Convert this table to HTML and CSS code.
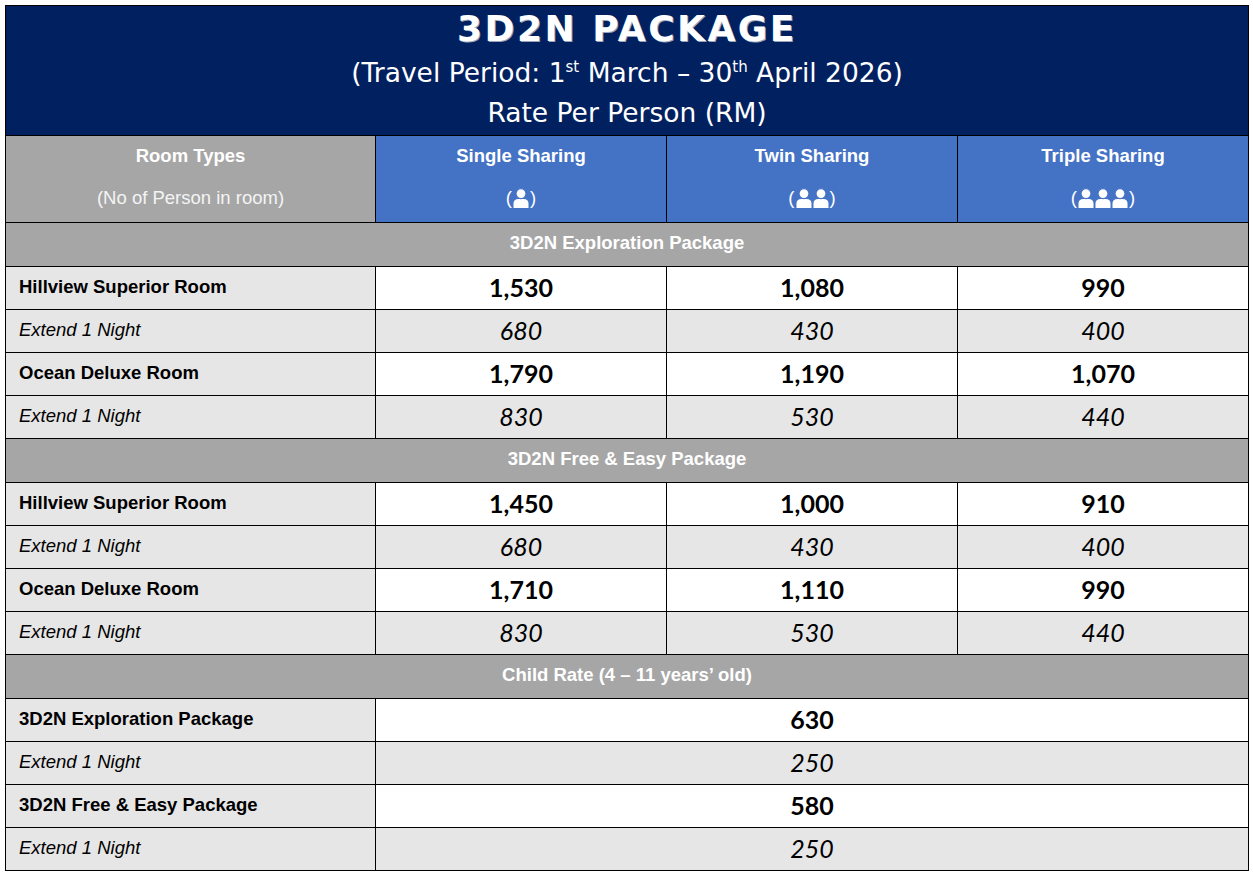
FILE: index.html
```html
<!DOCTYPE html>
<html lang="en">
<head>
<meta charset="utf-8">
<title>3D2N Package Rates</title>
<link rel="stylesheet" href="styles.css">
</head>
<body>
<svg class="defs" width="0" height="0" aria-hidden="true">
  <defs>
    <g id="person">
      <path d="M0.5 20 V15.5 Q0.5 11 5.5 11 H10.5 Q15.5 11 15.5 15.5 V20 Z" fill="#fff"/>
      <circle cx="8" cy="5.6" r="5" fill="#fff" stroke="#4472C4" stroke-width="1.2"/>
    </g>
  </defs>
</svg>
<div class="wrap">
<table class="rates">
  <colgroup>
    <col class="c-label">
    <col class="c-val">
    <col class="c-val">
    <col class="c-val">
  </colgroup>
  <thead>
    <tr class="banner-row">
      <th colspan="4" class="banner">
        <div class="title">3D2N PACKAGE</div>
        <div class="subs">
          <div class="sub">(Travel Period: 1<sup>st</sup> March – 30<sup>th</sup> April 2026)</div>
          <div class="sub">Rate Per Person (RM)</div>
        </div>
      </th>
    </tr>
    <tr class="colhead">
      <th class="rt">
        <div class="hname">Room Types</div>
        <div class="hnote">(No of Person in room)</div>
      </th>
      <th class="occ">
        <div class="hname">Single Sharing</div>
        <div class="hicon">(<svg class="ppl" width="16" height="20" viewBox="0 0 16 20"><use href="#person"/></svg>)</div>
      </th>
      <th class="occ">
        <div class="hname">Twin Sharing</div>
        <div class="hicon">(<svg class="ppl" width="33" height="20" viewBox="0 0 33 20"><use href="#person" x="17"/><use href="#person" x="0"/></svg>)</div>
      </th>
      <th class="occ">
        <div class="hname">Triple Sharing</div>
        <div class="hicon">(<svg class="ppl" width="50" height="20" viewBox="0 0 50 20"><use href="#person" x="34"/><use href="#person" x="17"/><use href="#person" x="0"/></svg>)</div>
      </th>
    </tr>
  </thead>
  <tbody>
    <tr class="section"><td colspan="4">3D2N Exploration Package</td></tr>
    <tr class="room"><td class="lbl">Hillview Superior Room</td><td>1,530</td><td>1,080</td><td>990</td></tr>
    <tr class="ext"><td class="lbl">Extend 1 Night</td><td>680</td><td>430</td><td>400</td></tr>
    <tr class="room"><td class="lbl">Ocean Deluxe Room</td><td>1,790</td><td>1,190</td><td>1,070</td></tr>
    <tr class="ext"><td class="lbl">Extend 1 Night</td><td>830</td><td>530</td><td>440</td></tr>

    <tr class="section"><td colspan="4">3D2N Free &amp; Easy Package</td></tr>
    <tr class="room"><td class="lbl">Hillview Superior Room</td><td>1,450</td><td>1,000</td><td>910</td></tr>
    <tr class="ext"><td class="lbl">Extend 1 Night</td><td>680</td><td>430</td><td>400</td></tr>
    <tr class="room"><td class="lbl">Ocean Deluxe Room</td><td>1,710</td><td>1,110</td><td>990</td></tr>
    <tr class="ext"><td class="lbl">Extend 1 Night</td><td>830</td><td>530</td><td>440</td></tr>

    <tr class="section"><td colspan="4">Child Rate (4 – 11 years’ old)</td></tr>
    <tr class="room"><td class="lbl">3D2N Exploration Package</td><td colspan="3">630</td></tr>
    <tr class="ext"><td class="lbl">Extend 1 Night</td><td colspan="3">250</td></tr>
    <tr class="room"><td class="lbl">3D2N Free &amp; Easy Package</td><td colspan="3">580</td></tr>
    <tr class="ext"><td class="lbl">Extend 1 Night</td><td colspan="3">250</td></tr>
  </tbody>
</table>
</div>
</body>
</html>
```
FILE: styles.css
```css
html, body {
  margin: 0;
  padding: 0;
  background: #ffffff;
}

.defs {
  position: absolute;
  width: 0;
  height: 0;
  overflow: hidden;
}

.wrap {
  padding: 5px 0 0 5px;
}

.rates {
  width: 1243px;
  table-layout: fixed;
  border-collapse: collapse;
  font-family: "Liberation Sans", Arial, sans-serif;
}

.c-label { width: 370px; }
.c-val { width: 291px; }

.rates th,
.rates td {
  border: 1px solid #000;
  padding: 0;
}

/* Banner */
.banner {
  background: #002060;
  color: #ffffff;
  height: 129px;
  font-weight: normal;
  vertical-align: top;
}

.title {
  font-family: "DejaVu Sans", sans-serif;
  font-weight: bold;
  font-size: 36px;
  letter-spacing: 2.5px;
  line-height: 40px;
  padding-top: 3px;
  text-shadow: 1px 1px 0 #9aa3b8;
}

.subs {
  padding-top: 4px;
}

.sub {
  font-family: "DejaVu Sans", sans-serif;
  font-size: 26.5px;
  line-height: 40px;
}

.sub sup {
  font-size: 15px;
  line-height: 0;
  vertical-align: 10px;
}

/* Column headers */
.colhead th {
  height: 86px;
  color: #ffffff;
  vertical-align: middle;
}

.colhead .rt {
  background: #A6A6A6;
}

.colhead .occ {
  background: #4472C4;
}

.hname {
  font-size: 18.5px;
  font-weight: bold;
  line-height: 24px;
  margin-top: -4px;
}

.hnote {
  font-size: 18.5px;
  font-weight: normal;
  line-height: 24px;
  margin-top: 18px;
  color: #f4f4f4;
}

.hicon {
  font-size: 18.5px;
  font-weight: normal;
  line-height: 24px;
  margin-top: 18px;
  display: flex;
  justify-content: center;
  align-items: center;
  gap: 1px;
}

.ppl {
  display: block;
}

/* Section rows */
.section td {
  background: #A6A6A6;
  color: #ffffff;
  height: 40px;
  padding-bottom: 3px;
  text-align: center;
  font-size: 18.5px;
  font-weight: bold;
}

/* Data rows */
.room td,
.ext td {
  height: 39px;
  padding-bottom: 3px;
  text-align: center;
  font-family: Lato, "Liberation Sans", sans-serif;
  font-size: 25px;
  color: #000;
}

.room td {
  background: #ffffff;
  font-weight: bold;
}

.ext td {
  background: #E6E6E6;
  font-style: italic;
  font-weight: normal;
}

.rates td.lbl {
  background: #E6E6E6;
  text-align: left;
  padding-left: 13px;
  font-family: "Liberation Sans", Arial, sans-serif;
  font-size: 18.5px;
}

.room td.lbl {
  font-weight: bold;
  font-style: normal;
}
```
